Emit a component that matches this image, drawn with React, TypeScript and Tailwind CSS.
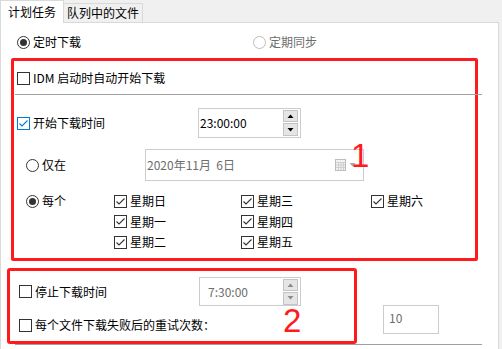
import type { ReactNode } from "react";

function CheckBox({ checked = false, focus = false }: { checked?: boolean; focus?: boolean }) {
  const c = focus ? "#0078d7" : "#333333";
  return (
    <svg width="13" height="13" viewBox="0 0 13 13" className="shrink-0" aria-hidden>
      <rect x="0.5" y="0.5" width="12" height="12" fill="#fff" stroke={c} />
      {checked && <path d="M2.5 6.5 L5 9 L10.5 3.5" fill="none" stroke={c} strokeWidth="1.1" />}
    </svg>
  );
}

function Radio({ checked = false, disabled = false }: { checked?: boolean; disabled?: boolean }) {
  return (
    <svg width="13" height="13" viewBox="0 0 13 13" className="shrink-0" aria-hidden>
      <circle cx="6.5" cy="6.5" r="6" fill="#fff" stroke={disabled ? "#bcbcbc" : "#333333"} />
      {checked && <circle cx="6.5" cy="6.5" r="3.5" fill="#333333" />}
    </svg>
  );
}

function Tri({ up, color }: { up: boolean; color: string }) {
  return (
    <svg width="7" height="4" viewBox="0 0 7 4" aria-hidden>
      <path d={up ? "M0.5 4 L3.5 0.5 L6.5 4 Z" : "M0.5 0 L3.5 3.5 L6.5 0 Z"} fill={color} />
    </svg>
  );
}

function SpinBox({
  value,
  disabled = false,
  className,
}: {
  value: string;
  disabled?: boolean;
  className: string;
}) {
  const tri = disabled ? "#8a8a8a" : "#000";
  return (
    <div className={`flex items-center justify-between border border-[#cccccc] pr-[2px] ${className}`}>
      <span className={disabled ? "text-[#6d6d6d]" : "text-black"}>{value}</span>
      <div className="flex flex-col gap-px">
        <div className="flex h-[12px] w-[15px] items-center justify-center border border-[#c4c4c4] bg-[#e5e5e5]">
          <Tri up color={tri} />
        </div>
        <div className="flex h-[13px] w-[15px] items-center justify-center border border-[#c4c4c4] bg-[#e5e5e5]">
          <Tri up={false} color={tri} />
        </div>
      </div>
    </div>
  );
}

function Label({ children, className = "" }: { children: ReactNode; className?: string }) {
  return <div className={`flex items-center gap-[3px] whitespace-nowrap ${className}`}>{children}</div>;
}

const weekdays = [
  ["星期日", "星期三", "星期六"],
  ["星期一", "星期四", ""],
  ["星期二", "星期五", ""],
];

export default function App() {
  return (
    <div className="h-[349px] w-[502px] overflow-hidden bg-[#f0f0f0] font-['Noto_Sans_CJK_SC',sans-serif] text-[12px] leading-none text-black">
      {/* tabs */}
      <div className="flex h-[22px] items-end">
        <div className="relative z-10 -mb-px flex h-[23px] w-[64px] items-center justify-center border-x border-t border-[#d9d9d9] bg-white">
          计划任务
        </div>
        <div className="flex h-[19px] w-[79px] items-center justify-center border-r border-t border-[#d9d9d9] bg-[#f0f0f0]">
          队列中的文件
        </div>
      </div>

      <div className="relative h-[340px] w-[499px] border border-[#d9d9d9] bg-white">
        <div className="mt-[12px] flex h-[14px] items-center pl-[16px]">
          <Label className="w-[236px]">
            <Radio checked />
            定时下载
          </Label>
          <Label className="text-[#6d6d6d]">
            <Radio disabled />
            定期同步
          </Label>
        </div>

        {/* box 1 */}
        <div className="ml-[10px] mt-[9px] h-[203px] w-[467px] rounded-[2px] border-[3px] border-[#ff1b1b]">
          <Label className="mt-[10px] h-[14px] pl-[3px]">
            <CheckBox />
            IDM 启动时自动开始下载
          </Label>
          <div className="ml-px mt-[9px] h-px w-[467px] bg-[#a0a0a0]" />

          <div className="mt-[13px] flex h-[30px] items-center pl-[3px]">
            <Label className="w-[181px]">
              <CheckBox checked focus />
              开始下载时间
            </Label>
            <SpinBox value="23:00:00" className="h-[30px] w-[103px] pl-px" />
          </div>

          <div className="mt-[11px] flex h-[32px] items-center pl-[12px]">
            <Label className="w-[119px]">
              <Radio />
              仅在
            </Label>
            <div className="flex h-[32px] w-[219px] items-center justify-between border border-[#cccccc] pl-px pr-[7px]">
              <span className="whitespace-pre text-[#6d6d6d]">2020年11月  6日</span>
              <div className="flex items-center gap-[3px]">
                <svg width="11" height="12" viewBox="0 0 11 12" aria-hidden>
                  <rect x="0.5" y="0.5" width="10" height="11" fill="#f2f2f2" stroke="#bdbdbd" />
                  <path d="M1 3.5 H10 M1 6 H10 M1 8.5 H10 M3.5 3.5 V11 M6 3.5 V11 M8.5 3.5 V11" stroke="#cfcfcf" />
                </svg>
                <Tri up={false} color="#a8a8a8" />
              </div>
            </div>
          </div>

          <div className="mt-[10px] flex pl-[12px]">
            <Label className="h-[20.5px] w-[88px]">
              <Radio checked />
              每个
            </Label>
            <div className="grid auto-rows-[20.5px] grid-cols-[127px_130px_auto]">
              {weekdays.flat().map((d, i) =>
                d ? (
                  <Label key={i}>
                    <CheckBox checked />
                    {d}
                  </Label>
                ) : (
                  <div key={i} />
                ),
              )}
            </div>
          </div>
        </div>

        {/* box 2 */}
        <div className="ml-[6px] mt-[7px] flex">
          <div className="h-[76px] w-[350px] rounded-[3px] border-[3px] border-[#ff1b1b]">
            <div className="mt-[6px] flex h-[29px] items-center pl-[9px]">
              <Label className="w-[180px]">
                <CheckBox />
                停止下载时间
              </Label>
              <SpinBox value="7:30:00" disabled className="h-[29px] w-[102px] pl-[8px]" />
            </div>
            <Label className="mt-[12px] h-[14px] pl-[9px]">
              <CheckBox />
              每个文件下载失败后的重试次数：
            </Label>
          </div>
          <div className="ml-[26px] mt-[37px] flex h-[29px] w-[56px] items-start border border-[#cccccc] pl-[5px] pt-[6px] text-[#6d6d6d]">
            10
          </div>
        </div>
        <div className="ml-[14px] h-px w-[467px] bg-[#a0a0a0]" />

        {/* annotation numbers */}
        <span className="absolute left-[350px] top-[116px] font-['Liberation_Sans',sans-serif] text-[33px] leading-none text-[#ff1b1b]">
          1
        </span>
        <span className="absolute left-[282px] top-[281px] font-['Liberation_Sans',sans-serif] text-[33px] leading-none text-[#ff1b1b]">
          2
        </span>
      </div>
    </div>
  );
}
